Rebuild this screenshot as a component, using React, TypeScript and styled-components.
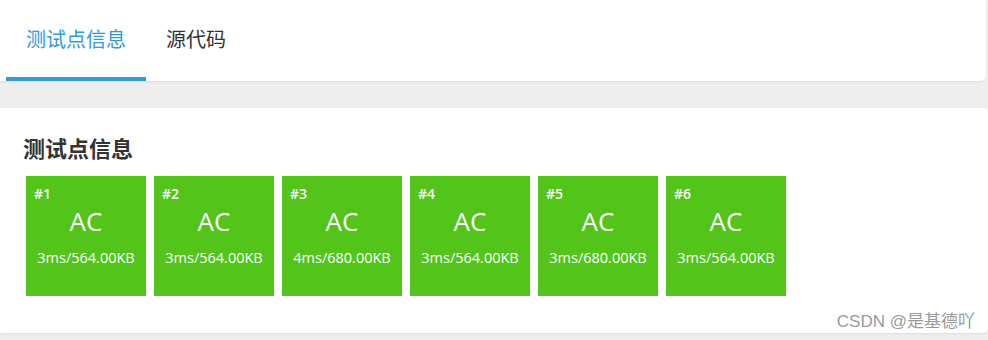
import React from 'react'
import styled, { createGlobalStyle } from 'styled-components'

const GlobalStyle = createGlobalStyle`
  html, body {
    margin: 0;
    padding: 0;
    background: #eeeeee;
    font-family: "Open Sans", "Noto Sans CJK SC", sans-serif;
  }
`

type Case = { id: number; status: string; time: string; memory: string }

const cases: Case[] = [
  { id: 1, status: 'AC', time: '3ms', memory: '564.00KB' },
  { id: 2, status: 'AC', time: '3ms', memory: '564.00KB' },
  { id: 3, status: 'AC', time: '4ms', memory: '680.00KB' },
  { id: 4, status: 'AC', time: '3ms', memory: '564.00KB' },
  { id: 5, status: 'AC', time: '3ms', memory: '680.00KB' },
  { id: 6, status: 'AC', time: '3ms', memory: '564.00KB' },
]

export default function App() {
  return (
    <Page>
      <GlobalStyle />
      <TabCard>
        <Tab active>测试点信息</Tab>
        <Tab>源代码</Tab>
      </TabCard>

      <InfoCard>
        <Title>测试点信息</Title>
        <CaseGrid>
          {cases.map(c => (
            <CaseBox key={c.id}>
              <CaseId>#{c.id}</CaseId>
              <CaseStatus>{c.status}</CaseStatus>
              <CaseStat>
                {c.time}/{c.memory}
              </CaseStat>
            </CaseBox>
          ))}
        </CaseGrid>
        <Watermark>CSDN @是基德吖</Watermark>
      </InfoCard>
    </Page>
  )
}

const Page = styled.div`
  width: 988px;
  height: 340px;
  overflow: hidden;
`

const TabCard = styled.div`
  display: flex;
  width: 986px;
  height: 81px;
  padding-left: 6px;
  box-sizing: border-box;
  background: #fff;
  border-radius: 0 0 5px 0;
  box-shadow: 0 1px 2px rgba(0, 0, 0, 0.08);
`

const Tab = styled.div<{ active?: boolean }>`
  display: flex;
  align-items: center;
  padding: 0 20px;
  height: 100%;
  box-sizing: border-box;
  border-bottom: 4px solid ${p => (p.active ? '#3498db' : 'transparent')};
  font-size: 20px;
  color: ${p => (p.active ? '#3498db' : '#333')};
`

const InfoCard = styled.div`
  position: relative;
  margin-top: 27px;
  height: 225px;
  padding: 24px 0 0 23px;
  box-sizing: border-box;
  background: #fff;
  border-radius: 0 5px 5px 0;
  box-shadow: 0 1px 2px rgba(0, 0, 0, 0.08);
`

const Title = styled.h3`
  margin: 0 0 12px;
  font-size: 22px;
  font-weight: 700;
  color: #333;
  line-height: 32px;
`

const CaseGrid = styled.div`
  display: flex;
  gap: 8px;
  padding-left: 3px;
`

const CaseBox = styled.div`
  display: flex;
  flex-direction: column;
  width: 120px;
  height: 120px;
  padding: 10px 8px 0;
  box-sizing: border-box;
  background: #52c41a;
  color: #fff;
`

const CaseId = styled.div`
  font-size: 14px;
  font-weight: 600;
  line-height: 16px;
`

const CaseStatus = styled.div`
  margin-top: 2px;
  text-align: center;
  font-size: 26px;
  line-height: 34px;
`

const CaseStat = styled.div`
  margin-top: 10px;
  text-align: center;
  font-size: 14.5px;
  font-weight: 500;
  line-height: 20px;
  white-space: nowrap;
`

const Watermark = styled.div`
  position: absolute;
  right: 13px;
  bottom: 1px;
  font-family: "Liberation Sans", "Noto Sans CJK SC", sans-serif;
  font-size: 17px;
  color: #9a9a9a;
`
